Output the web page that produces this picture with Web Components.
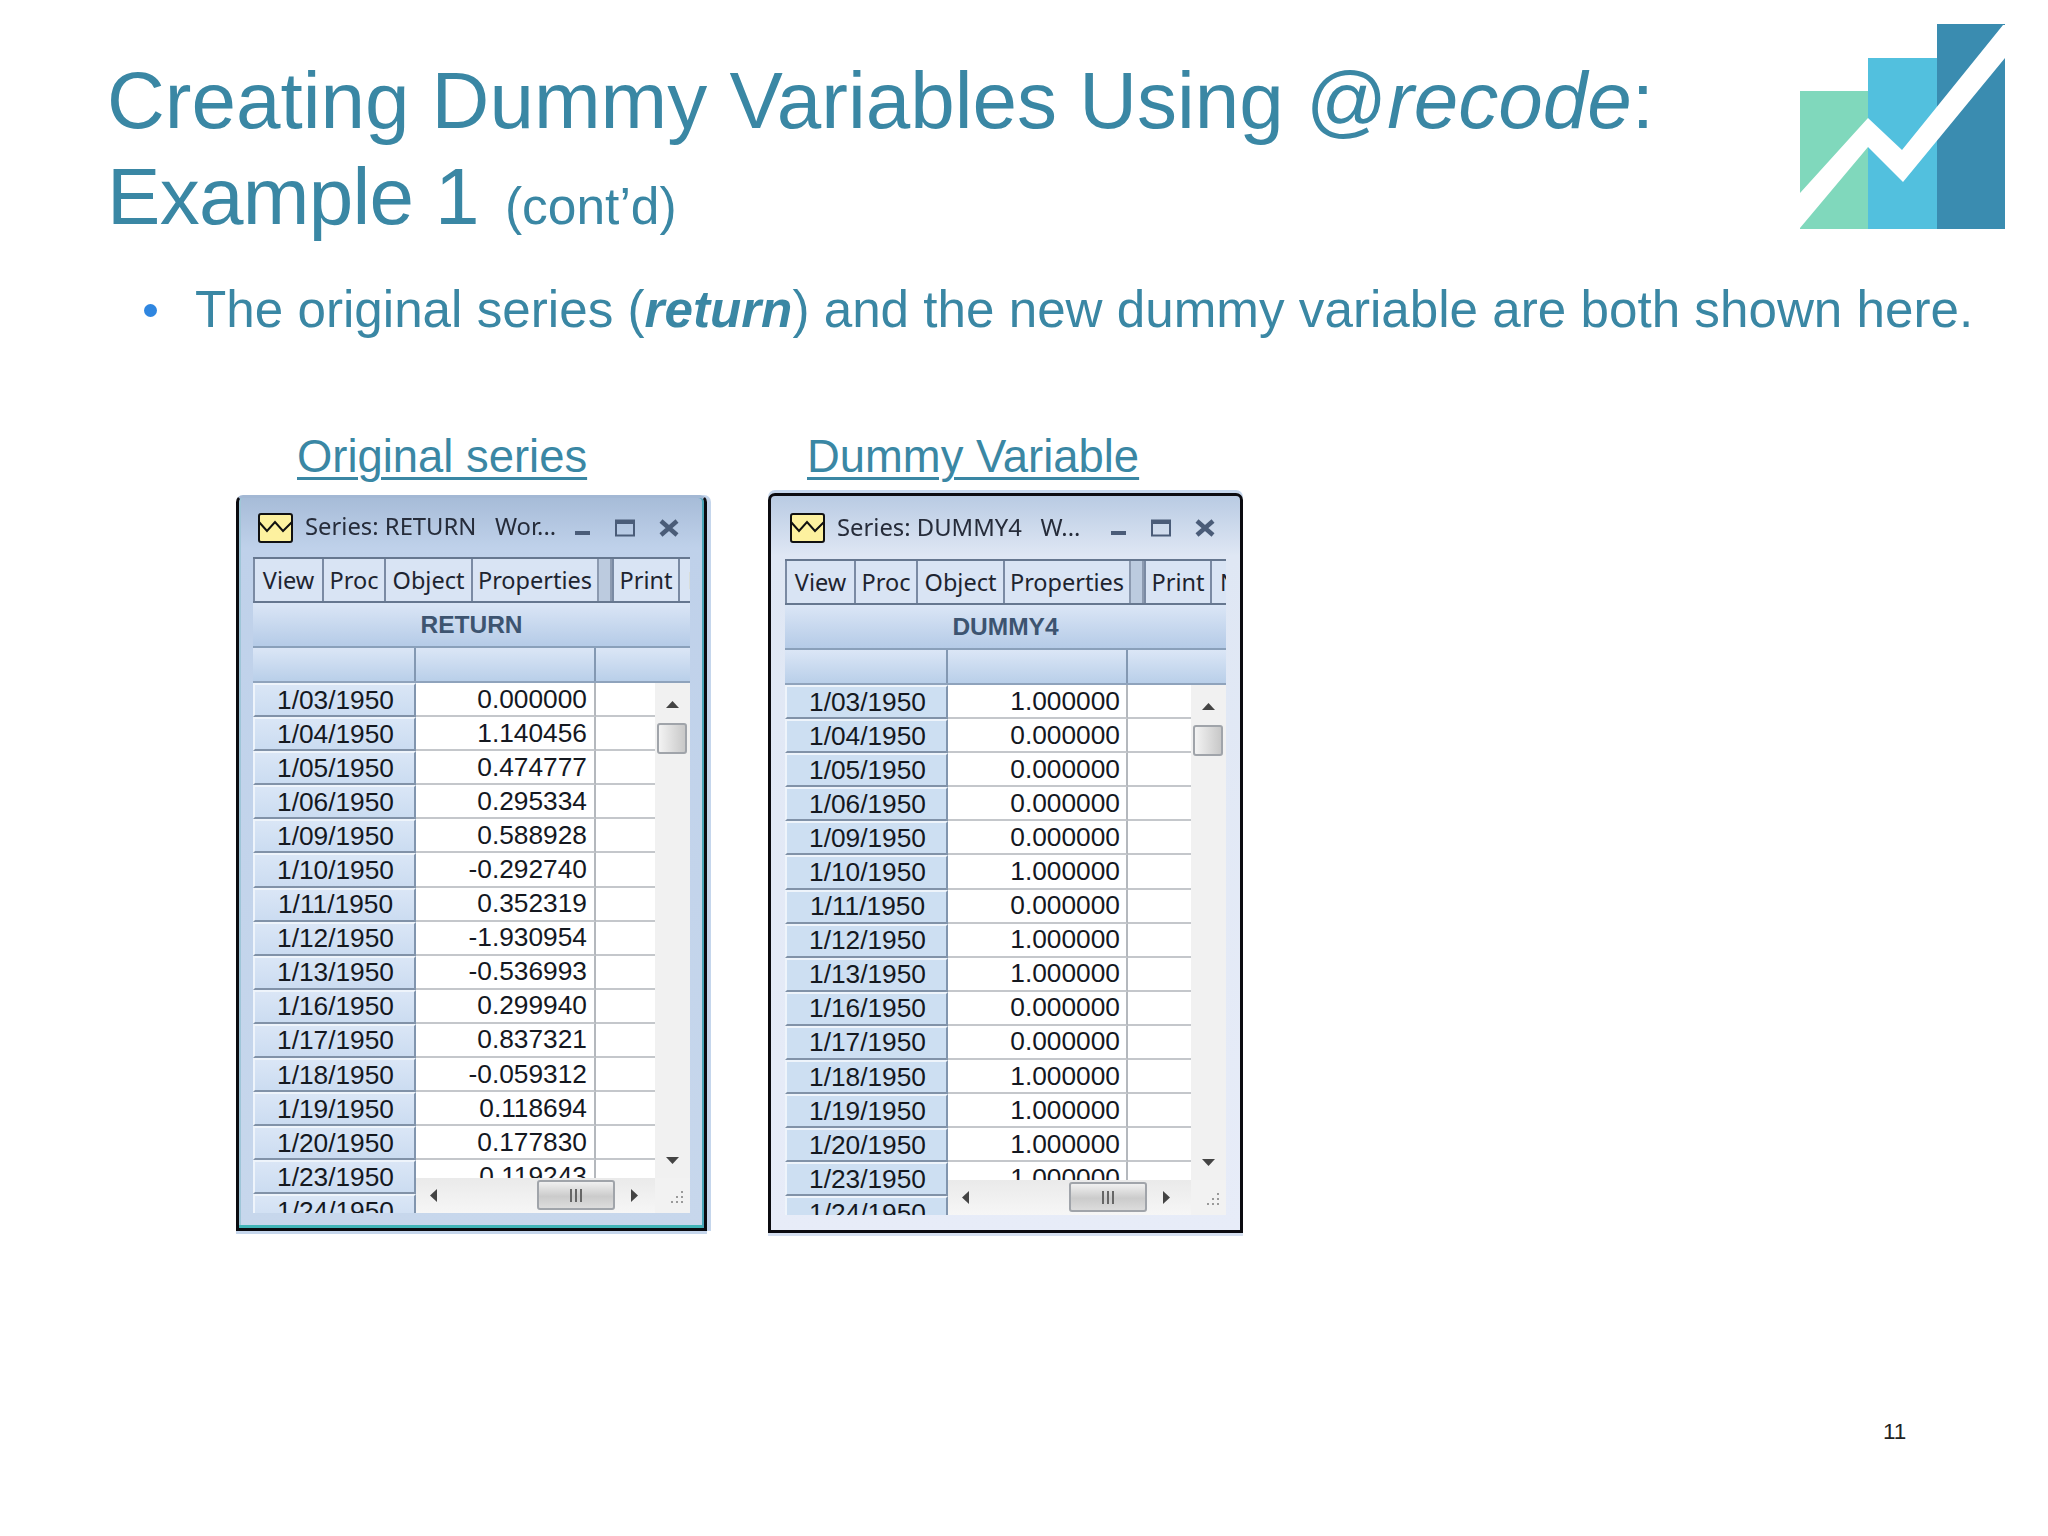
<!DOCTYPE html>
<html>
<head>
<meta charset="utf-8">
<style>
  html, body { margin: 0; padding: 0; background: #fff; }
  body { width: 2048px; height: 1536px; overflow: hidden; font-family: "Liberation Sans", Arial, sans-serif; }
</style>
</head>
<body>
<slide-page>
  <slide-title slot="title">Creating Dummy Variables Using @<i>recode</i>:<br><span>Example 1</span> <small>(cont’d)</small></slide-title>
  <logo-mark slot="logo"></logo-mark>
  <slide-bullet slot="bullet">The original series (<b><i>return</i></b>) and the new dummy variable are both shown here.</slide-bullet>
  <series-panel label="Original series">
    <series-window name="RETURN" caption="Series: RETURN&#160;&#160; Wor..."
      data-valores='["0.000000","1.140456","0.474777","0.295334","0.588928","-0.292740","0.352319","-1.930954","-0.536993","0.299940","0.837321","-0.059312","0.118694","0.177830","0.119243",""]'></series-window>
  </series-panel>
  <series-panel label="Dummy Variable" variant="pale">
    <series-window name="DUMMY4" variant="pale" caption="Series: DUMMY4&#160;&#160; W..."
      data-valores='["1.000000","0.000000","0.000000","0.000000","0.000000","1.000000","0.000000","1.000000","1.000000","0.000000","0.000000","1.000000","1.000000","1.000000","1.000000",""]'></series-window>
  </series-panel>
  <page-number slot="number">11</page-number>
</slide-page>

<script>
// Lienzo de la diapositiva
class SlidePage extends HTMLElement {
    constructor() {
        super();
        this.attachShadow({ mode: 'open' });
        this.shadowRoot.innerHTML = `
            <style>
                :host { display: block; width: 2048px; height: 1536px; box-sizing: border-box; position: relative; }
                .head { display: flex; justify-content: space-between; align-items: flex-start; padding: 24px 43px 0 107px; height: 229px; box-sizing: border-box; }
                .bullet { padding: 50px 0 0 143px; }
                .windows { display: flex; align-items: flex-start; gap: 54px; padding: 0 0 0 236px; margin-top: 89px; }
                .number { position: absolute; left: 1883px; top: 1420px; }
            </style>
            <div class="head"><slot name="title"></slot><slot name="logo"></slot></div>
            <div class="bullet"><slot name="bullet"></slot></div>
            <div class="windows"><slot></slot></div>
            <div class="number"><slot name="number"></slot></div>
        `;
    }
}

class SlideTitle extends HTMLElement {
    constructor() {
        super();
        this.attachShadow({ mode: 'open' });
        this.shadowRoot.innerHTML = `
            <style>
                :host { display: block; color: #3a87a4; font-size: 80px; line-height: 96px; margin-top: 29px; white-space: nowrap; }
            </style>
            <slot></slot>
        `;
    }
    connectedCallback() {
        const small = this.querySelector('small');
        if (small) { small.style.fontSize = '51.5px'; small.style.marginLeft = '4px'; }
        const span = this.querySelector('span');
        if (span) { span.style.letterSpacing = '-.7px'; }
    }
}

class SlideBullet extends HTMLElement {
    constructor() {
        super();
        this.attachShadow({ mode: 'open' });
        this.shadowRoot.innerHTML = `
            <style>
                :host { display: flex; align-items: center; color: #3a87a4; font-size: 51.2px; line-height: 62px; white-space: nowrap; }
                .dot { width: 13px; height: 13px; border-radius: 50%; background: #2f86e0; margin: 0 38px 0 1px; flex: none; }
            </style>
            <span class="dot"></span><span><slot></slot></span>
        `;
    }
}

class LogoMark extends HTMLElement {
    constructor() {
        super();
        this.attachShadow({ mode: 'open' });
        this.shadowRoot.innerHTML = `
            <style>:host { display: block; width: 205px; height: 205px; filter: blur(.5px); }</style>
            <svg width="205" height="205" viewBox="0 0 205 205">
                <rect x="0" y="67" width="68" height="138" fill="#80d8bc"/>
                <rect x="68" y="34" width="69" height="171" fill="#52c0de"/>
                <rect x="137" y="0" width="68" height="205" fill="#3a8cb0"/>
                <path d="M0 169 L68 94 L102 126 L203 1 L205 1 L205 34 L103 158 L68 123 L0 204 Z" fill="#fff"/>
            </svg>
        `;
    }
}

class SeriesPanel extends HTMLElement {
    constructor() {
        super();
        this.attachShadow({ mode: 'open' });
    }
    connectedCallback() {
        const pale = this.getAttribute('variant') === 'pale';
        this.shadowRoot.innerHTML = `
            <style>
                :host { display: block; width: ${pale ? 476 : 478}px; }
                .lab { color: #3a87a4; font-size: 45.4px; line-height: 54px; text-decoration: underline; text-decoration-thickness: 3px; text-underline-offset: 5px;
                       padding-left: ${pale ? 39 : 61}px; height: 63px; white-space: nowrap; }
                .win { margin-top: ${pale ? 0 : 2}px; }
            </style>
            <div class="lab">${this.getAttribute('label')}</div>
            <div class="win"><slot></slot></div>
        `;
    }
}

// Ventana de serie estilo Windows 7
class SeriesWindow extends HTMLElement {
    constructor() {
        super();
        this.attachShadow({ mode: 'open' });
    }

    connectedCallback() {
        this.render();
    }

    render() {
        const pale = this.getAttribute('variant') === 'pale';
        const valores = JSON.parse(this.getAttribute('data-valores'));
        const fechas = ['1/03/1950','1/04/1950','1/05/1950','1/06/1950','1/09/1950','1/10/1950','1/11/1950','1/12/1950','1/13/1950','1/16/1950','1/17/1950','1/18/1950','1/19/1950','1/20/1950','1/23/1950','1/24/1950'];
        const filas = fechas.map((f, i) => `
            <div class="d">${f}</div><div class="v">${valores[i]}</div><div class="e"></div>`).join('');

        this.shadowRoot.innerHTML = `
            <style>
                :host { display: block; width: ${pale ? 475 : 471}px; height: ${pale ? 740 : 736}px; filter: blur(.65px); }
                .frame { box-sizing: border-box; width: 100%; height: 100%; border: 3px solid #0b0b10; border-radius: 7px 7px 0 0;
                         padding: 0 14px 0 14px; position: relative;
                         background: ${pale ? 'linear-gradient(#b9cbe3 0, #dfe7f4 60px, #e7ecf8 100%)' : 'linear-gradient(#a7bcd8 0, #bfd1ea 50px, #c7d7ec 100%)'};
                         ${pale ? 'box-shadow: 0 3px 0 #d5dff0, 0 -3px 0 #c5d6ec;' : 'border-top-color: #a3b8d4; box-shadow: inset -2px 0 0 #4aa6b8, inset 0 -3px 0 #41b5b8, inset 2px 0 0 #9fc6d8, 4px 0 0 #c5d6ec, 0 3px 0 #c5d6ec;'} }
                .cap { display: flex; align-items: center; height: ${pale ? 63 : 59}px; font: 23.8px "Noto Sans", "Open Sans", sans-serif; color: #262c3a; white-space: nowrap; }
                .cap svg.ic { margin: 0 12px 0 5px; flex: none; }
                .cap .t { flex: 1; position: relative; top: ${pale ? -1 : -2}px; }
                .cap .bt { display: flex; align-items: center; gap: 24px; margin-right: 11px; }
                .tb { display: flex; height: 46px; border-top: 2px solid #66778f; border-bottom: 2px solid #66778f; box-sizing: border-box; overflow: hidden;
                      font: 23.5px "Noto Sans", "Open Sans", sans-serif; color: #1e2430; background: #d9e4f4; }
                .tb span { box-sizing: border-box; display: flex; align-items: center; justify-content: center; height: 100%; border-left: 2px solid #7a8aa3; flex: none; }
                .tb .grip { background: #bccbdf; border-left-color: #8c9ab0; border-right: 2px solid #8c9ab0; }
                .tb .cut { justify-content: flex-start; padding-left: 8px; }
                .name { height: 45px; display: flex; align-items: center; justify-content: center; box-sizing: border-box; border-bottom: 2px solid #8aa0ba;
                        background: linear-gradient(#dbe6f6, #b5cbe7); font: bold 24.5px "Liberation Sans", sans-serif; color: #3d5470; }
                .hd { display: grid; grid-template-columns: 163px 180px 1fr; height: 35px; box-sizing: border-box; border-bottom: 2px solid #8fa3bc; background: linear-gradient(#dbe6f6, #b9cfe9); }
                .hd i { border-right: 2px solid #8398b2; }
                .hd i:last-child { border: 0; }
                .body { position: relative; height: 530px; overflow: hidden; background: #fff; }
                .rows { display: grid; grid-template-columns: 163px 180px 1fr; grid-auto-rows: 34.1px; font: 26.3px "Liberation Sans", sans-serif; color: #14181f; }
                .rows div { box-sizing: border-box; display: flex; align-items: center; }
                .d { justify-content: center; padding-left: 2px; background: ${pale ? '#cddff2' : 'linear-gradient(#dae6f6,#cbdcf1)'}; border-bottom: 2px solid #8192a8; border-right: 2px solid #8195ae; border-top: 2px solid #eef4fb; border-left: 2px solid #eef4fb; }
                .v { justify-content: flex-end; padding-right: ${pale ? 6 : 7}px; border-bottom: 2px solid #c4c7cb; border-right: 2px solid #b4b8bd; }
                .e { border-bottom: 2px solid #c4c7cb; }
                .vs { position: absolute; right: 0; top: 0; width: 35px; height: 495px; background: #f1f1f1; }
                .thumb-v { position: absolute; left: 2px; top: 40px; width: 30px; height: 31px; box-sizing: border-box; border: 2px solid #a0a4aa; border-radius: 3px;
                           background: linear-gradient(90deg, #f3f3f3, #c8c8c8); }
                .hs { position: absolute; left: 163px; right: 35px; bottom: 0; height: 35px; background: linear-gradient(#eaeaea, #f6f6f6); }
                .thumb-h { position: absolute; left: 121px; top: 2px; width: 78px; height: 30px; box-sizing: border-box; border: 2px solid #a0a4aa; border-radius: 3px;
                           background: linear-gradient(#f0f0f0, #cbcbcb 55%, #dcdcdc); display: flex; align-items: center; justify-content: center; gap: 3px; }
                .thumb-h b { width: 2px; height: 13px; background: #666; }
                .corner { position: absolute; right: 0; bottom: 0; width: 35px; height: 35px; background: #f2f2f2; }
                .arr { position: absolute; }
            </style>
            <div class="frame">
                <div class="cap">
                    <svg class="ic" width="35" height="30" viewBox="0 0 35 30">
                        <rect x="1" y="1" width="33" height="28" rx="2" fill="#fdf19f" stroke="#111" stroke-width="2"/>
                        <path d="M1 8 L9 17 L17 8 L25 17 L34 8" transform="translate(0,1)" fill="none" stroke="#111" stroke-width="2"/>
                    </svg>
                    <span class="t">${this.getAttribute('caption')}</span>
                    <span class="bt">
                        <svg width="16" height="16" viewBox="0 0 16 16"><rect x="0" y="11" width="15" height="4" fill="#4a5c78"/></svg>
                        <svg width="20" height="18" viewBox="0 0 20 18"><rect x="1" y="1.5" width="18" height="15" fill="none" stroke="#4a5c78" stroke-width="2"/><rect x="1" y="1" width="18" height="4" fill="#4a5c78"/></svg>
                        <svg width="20" height="18" viewBox="0 0 20 18"><path d="M2 2 L18 16 M18 2 L2 16" stroke="#4a5c78" stroke-width="4.5"/></svg>
                    </span>
                </div>
                <div class="tb">
                    <span style="width:69px">View</span><span style="width:62px">Proc</span><span style="width:87px">Object</span><span style="width:126px">Properties</span><span class="grip" style="width:15px"></span><span style="width:66px">Print</span><span class="cut" style="width:40px">N</span>
                </div>
                <div class="name">${this.getAttribute('name')}</div>
                <div class="hd"><i></i><i></i><i></i></div>
                <div class="body">
                    <div class="rows">${filas}</div>
                    <div class="vs">
                        <svg class="arr" style="left:11px;top:18px" width="13" height="7" viewBox="0 0 13 7"><path d="M6.5 0 L13 7 H0Z" fill="#444"/></svg>
                        <div class="thumb-v"></div>
                        <svg class="arr" style="left:11px;top:474px" width="13" height="7" viewBox="0 0 13 7"><path d="M0 0 H13 L6.5 7Z" fill="#444"/></svg>
                    </div>
                    <div class="hs">
                        <svg class="arr" style="left:14px;top:11px" width="7" height="13" viewBox="0 0 7 13"><path d="M7 0 V13 L0 6.5Z" fill="#444"/></svg>
                        <div class="thumb-h"><b></b><b></b><b></b></div>
                        <svg class="arr" style="left:215px;top:11px" width="7" height="13" viewBox="0 0 7 13"><path d="M0 0 L7 6.5 L0 13Z" fill="#444"/></svg>
                    </div>
                    <div class="corner">
                        <svg class="arr" style="left:14px;top:12px" width="16" height="16" viewBox="0 0 16 16"><g fill="#9a9a9a"><rect x="12" y="1" width="2" height="2"/><rect x="7" y="6" width="2" height="2"/><rect x="12" y="6" width="2" height="2"/><rect x="2" y="11" width="2" height="2"/><rect x="7" y="11" width="2" height="2"/><rect x="12" y="11" width="2" height="2"/></g></svg>
                    </div>
                </div>
            </div>
        `;
    }
}

class PageNumber extends HTMLElement {
    constructor() {
        super();
        this.attachShadow({ mode: 'open' });
        this.shadowRoot.innerHTML = `
            <style>:host { display: block; font-size: 22.5px; line-height: 24px; color: #222; }</style>
            <slot></slot>
        `;
    }
}

customElements.define('slide-page', SlidePage);
customElements.define('slide-title', SlideTitle);
customElements.define('slide-bullet', SlideBullet);
customElements.define('logo-mark', LogoMark);
customElements.define('series-panel', SeriesPanel);
customElements.define('series-window', SeriesWindow);
customElements.define('page-number', PageNumber);
</script>
</body>
</html>
